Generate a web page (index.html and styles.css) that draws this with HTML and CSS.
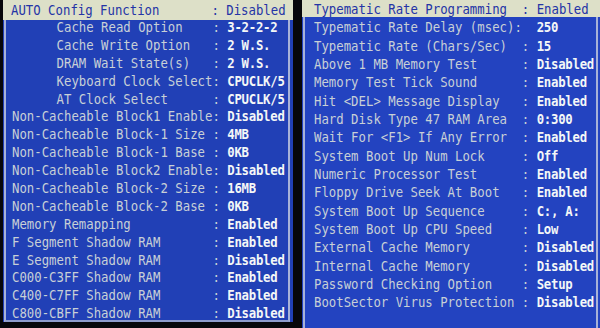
FILE: index.html
```html
<!DOCTYPE html>
<html>
<head>
<meta charset="utf-8">
<link rel="stylesheet" href="styles.css">
</head>
<body>
<div class="screen">
  <div class="panel left">
    <div class="frame">
      <div class="row hl"><span class="lab">AUTO Config Function</span><span class="sep">:</span><span class="val">Disabled</span></div>
      <div class="row"><span class="lab ind">Cache Read Option</span><span class="sep">:</span><span class="val">3-2-2-2</span></div>
      <div class="row"><span class="lab ind">Cache Write Option</span><span class="sep">:</span><span class="val">2 W.S.</span></div>
      <div class="row"><span class="lab ind">DRAM Wait State(s)</span><span class="sep">:</span><span class="val">2 W.S.</span></div>
      <div class="row"><span class="lab ind">Keyboard Clock Select</span><span class="sep">:</span><span class="val">CPUCLK/5</span></div>
      <div class="row"><span class="lab ind">AT Clock Select</span><span class="sep">:</span><span class="val">CPUCLK/5</span></div>
      <div class="row"><span class="lab">Non-Cacheable Block1 Enable</span><span class="sep">:</span><span class="val">Disabled</span></div>
      <div class="row"><span class="lab">Non-Cacheable Block-1 Size</span><span class="sep">:</span><span class="val">4MB</span></div>
      <div class="row"><span class="lab">Non-Cacheable Block-1 Base</span><span class="sep">:</span><span class="val">0KB</span></div>
      <div class="row"><span class="lab">Non-Cacheable Block2 Enable</span><span class="sep">:</span><span class="val">Disabled</span></div>
      <div class="row"><span class="lab">Non-Cacheable Block-2 Size</span><span class="sep">:</span><span class="val">16MB</span></div>
      <div class="row"><span class="lab">Non-Cacheable Block-2 Base</span><span class="sep">:</span><span class="val">0KB</span></div>
      <div class="row"><span class="lab">Memory Remapping</span><span class="sep">:</span><span class="val">Enabled</span></div>
      <div class="row"><span class="lab">F Segment Shadow RAM</span><span class="sep">:</span><span class="val">Enabled</span></div>
      <div class="row"><span class="lab">E Segment Shadow RAM</span><span class="sep">:</span><span class="val">Disabled</span></div>
      <div class="row"><span class="lab">C000-C3FF Shadow RAM</span><span class="sep">:</span><span class="val">Enabled</span></div>
      <div class="row"><span class="lab">C400-C7FF Shadow RAM</span><span class="sep">:</span><span class="val">Enabled</span></div>
      <div class="row"><span class="lab">C800-CBFF Shadow RAM</span><span class="sep">:</span><span class="val">Disabled</span></div>
    </div>
  </div>
  <div class="panel right">
    <div class="frame">
      <div class="row hl"><span class="lab">Typematic Rate Programming</span><span class="sep">:</span><span class="val">Enabled</span></div>
      <div class="row"><span class="lab">Typematic Rate Delay (msec):</span><span class="sep"></span><span class="val">250</span></div>
      <div class="row"><span class="lab">Typematic Rate (Chars/Sec)</span><span class="sep">:</span><span class="val">15</span></div>
      <div class="row"><span class="lab">Above 1 MB Memory Test</span><span class="sep">:</span><span class="val">Disabled</span></div>
      <div class="row"><span class="lab">Memory Test Tick Sound</span><span class="sep">:</span><span class="val">Enabled</span></div>
      <div class="row"><span class="lab">Hit &lt;DEL&gt; Message Display</span><span class="sep">:</span><span class="val">Enabled</span></div>
      <div class="row"><span class="lab">Hard Disk Type 47 RAM Area</span><span class="sep">:</span><span class="val">0:300</span></div>
      <div class="row"><span class="lab">Wait For &lt;F1&gt; If Any Error</span><span class="sep">:</span><span class="val">Enabled</span></div>
      <div class="row"><span class="lab">System Boot Up Num Lock</span><span class="sep">:</span><span class="val">Off</span></div>
      <div class="row"><span class="lab">Numeric Processor Test</span><span class="sep">:</span><span class="val">Enabled</span></div>
      <div class="row"><span class="lab">Floppy Drive Seek At Boot</span><span class="sep">:</span><span class="val">Enabled</span></div>
      <div class="row"><span class="lab">System Boot Up Sequence</span><span class="sep">:</span><span class="val">C:, A:</span></div>
      <div class="row"><span class="lab">System Boot Up CPU Speed</span><span class="sep">:</span><span class="val">Low</span></div>
      <div class="row"><span class="lab">External Cache Memory</span><span class="sep">:</span><span class="val">Disabled</span></div>
      <div class="row"><span class="lab">Internal Cache Memory</span><span class="sep">:</span><span class="val">Disabled</span></div>
      <div class="row"><span class="lab">Password Checking Option</span><span class="sep">:</span><span class="val">Setup</span></div>
      <div class="row"><span class="lab">BootSector Virus Protection</span><span class="sep">:</span><span class="val">Disabled</span></div>
    </div>
  </div>
</div>
</body>
</html>
```

FILE: styles.css
```css
html, body {
  margin: 0;
  padding: 0;
  background: #07070b;
}

.screen {
  width: 600px;
  height: 328px;
  display: flex;
  align-items: flex-start;
  overflow: hidden;
  font-family: "DejaVu Sans Mono", "Liberation Mono", monospace;
  font-size: 12.33px;
}

.panel {
  box-sizing: border-box;
  background: #2140b6;
}

.left {
  width: 290px;
  height: 322px;
  margin-left: 3px;
  padding: 0 3px 0 1px;
}

.right {
  width: 298px;
  height: 328px;
  margin-left: 9px;
  padding: 0 2px 0 1px;
  background: #2343c0;
}

.frame {
  height: 100%;
  border-left: 2px solid #a7b2d8;
  border-right: 2px solid #a7b2d8;
}

.left .frame {
  border-bottom: 2px solid #8e9bcc;
  box-sizing: border-box;
}

.row {
  display: flex;
  white-space: pre;
  color: #c8d0d6;
}

.row > span {
  transform: scaleY(1.15);
}

.left .row {
  height: 17.9px;
  line-height: 17.9px;
  padding-left: 6px;
}

.right .row {
  height: 18.33px;
  line-height: 18.33px;
  padding-left: 9px;
}

.left .lab {
  width: 27ch;
}

.right .lab {
  width: 28ch;
}

.lab.ind {
  padding-left: 6ch;
  box-sizing: border-box;
}

.sep {
  width: 2ch;
}

.val {
  color: #f4f7f7;
  font-weight: bold;
  letter-spacing: -0.25px;
}

.row.hl {
  background: #dde0c8;
  color: #2434a6;
  margin-left: -3px;
  margin-right: -5px;
}

.row.hl .val {
  color: #2434a6;
  font-weight: normal;
  letter-spacing: 0;
}

.left .row.hl {
  height: 20px;
  line-height: 20px;
  padding-left: 8px;
}

.right .row.hl {
  height: 16.5px;
  line-height: 18px;
  margin-bottom: 1.83px;
  padding-left: 12px;
}
```
